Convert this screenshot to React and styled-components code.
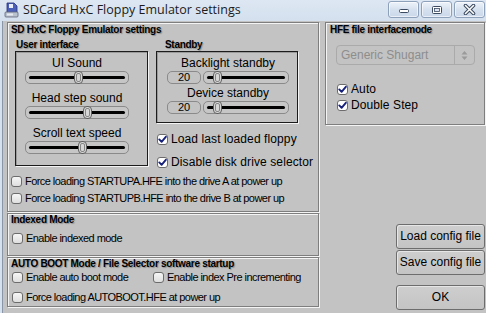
import React from 'react';
import styled, { createGlobalStyle } from 'styled-components';

const Global = createGlobalStyle`
  html, body { margin: 0; padding: 0; background: #c3c3c3; }
  body { font-family: "Liberation Sans", Arial, sans-serif; }
  * { box-sizing: border-box; }
`;

const GRAY = '#c3c3c3';

const Window = styled.div`
  width: 486px;
  height: 313px;
  overflow: hidden;
  display: flex;
  flex-direction: column;
  background: #d5e1ef;
`;

const TitleBar = styled.div`
  height: 21px;
  flex: none;
  display: flex;
  align-items: flex-start;
  padding-left: 4px;
  background: linear-gradient(#dde7f3, #d4e0ee);
`;

const TitleIcon = styled.svg`
  margin-top: 2px;
  flex: none;
`;

const TitleText = styled.span`
  font-family: "Open Sans", "Noto Sans", sans-serif;
  font-size: 12.5px;
  line-height: 20px;
  color: #1b1b1b;
  margin-left: 3px;
  white-space: nowrap;
`;

const Controls = styled.div`
  margin-left: auto;
  margin-right: 1px;
  margin-top: 1px;
  display: flex;
  gap: 2px;
`;

const CtrlButton = styled.div`
  width: 31px;
  height: 17px;
  border: 1px solid #8ea1bb;
  border-radius: 3px;
  background: linear-gradient(#eef3fa, #d6e1ef 50%, #cbd8ea);
  box-shadow: inset 0 0 0 1px rgba(255,255,255,0.6);
  display: flex;
  align-items: center;
  justify-content: center;
`;

const Client = styled.div`
  flex: 1;
  display: flex;
  gap: 6px;
  background: ${GRAY};
  margin-left: 2px;
  border-left: 1px solid #8a96a6;
  padding: 1px 0 0 4px;
`;

const LeftCol = styled.div`
  width: 312px;
  flex: none;
  display: flex;
  flex-direction: column;
  gap: 1px;
`;

const RightCol = styled.div`
  width: 160px;
  flex: none;
  display: flex;
  flex-direction: column;
`;

const Group = styled.div`
  height: ${p => p.$h}px;
  flex: none;
  border: 1px solid #7e7e7e;
  box-shadow: inset 1px 1px 0 #f4f4f4, 1px 1px 0 #f4f4f4;
  padding: ${p => p.$pad || '1px 0 0 3px'};
  display: flex;
  flex-direction: column;
`;

const GroupTitle = styled.div`
  font: bold 10px/${p => p.$lh || 12}px "Liberation Sans", Arial, sans-serif;
  letter-spacing: -0.3px;
  color: #000;
  text-shadow: 1px 1px 1px rgba(0,0,0,0.28);
  white-space: nowrap;
  margin-bottom: ${p => p.$mb || 0}px;
`;

const SubRow = styled.div`
  display: flex;
  gap: 8px;
  margin-top: 3px;
  margin-left: 4px;
`;

const SubCol = styled.div`
  display: flex;
  flex-direction: column;
  width: ${p => p.$w}px;
`;

const SubTitle = styled(GroupTitle)`
  margin-left: ${p => p.$ml}px;
`;

const InsetBox = styled.div`
  width: ${p => p.$w}px;
  height: ${p => p.$h}px;
  border: 1px solid #1c1c1c;
  box-shadow: 1px 1px 0 #f4f4f4, inset 1px 1px 0 #9a9a9a;
  padding: ${p => p.$pad};
  display: flex;
  flex-direction: column;
  gap: ${p => p.$gap}px;
`;

const SliderBlock = styled.div`
  display: flex;
  flex-direction: column;
  width: ${p => p.$w}px;
`;

const SliderLabel = styled.div`
  font-size: 12px;
  line-height: 14px;
  text-align: center;
  color: #000;
  margin-bottom: 1px;
  white-space: nowrap;
`;

const ControlRow = styled.div`
  display: flex;
  gap: 2px;
`;

const Track = styled.div`
  position: relative;
  width: ${p => p.$w}px;
  height: 13px;
  border: 1px solid #8a8a8a;
  border-radius: 5px;
  background: #c6c6c6;
`;

const Bar = styled.div`
  position: absolute;
  left: 3px;
  right: 3px;
  top: 4px;
  height: 3px;
  border-radius: 2px;
  background: #000;
`;

const Thumb = styled.div`
  position: absolute;
  top: -1px;
  width: 9px;
  height: 13px;
  margin-left: -4px;
  border: 1px solid #5e5e5e;
  border-radius: 4px;
  background: #d6d6d6;
  display: flex;
  align-items: center;
  justify-content: center;
  &::after {
    content: '';
    width: 3px;
    height: 7px;
    border: 1px solid #858585;
    border-radius: 2px;
  }
`;

const NumBox = styled.div`
  width: 34px;
  height: 13px;
  border: 1px solid #8a8a8a;
  border-radius: 5px;
  font-size: 11px;
  line-height: 11px;
  text-align: center;
  color: #000;
`;

const CheckRow = styled.label`
  display: flex;
  align-items: center;
  gap: 3px;
  height: 16px;
  width: ${p => (p.$w ? `${p.$w}px` : 'auto')};
  flex: none;
  margin: ${p => p.$m || '0'};
  font-size: ${p => p.$fs || 11}px;
  letter-spacing: ${p => (p.$fs === 12 ? '0.1px' : '-0.55px')};
  color: #000;
  white-space: nowrap;
`;

const Box = styled.span`
  width: 11px;
  height: 11px;
  flex: none;
  border: 1px solid #6c6c6c;
  border-radius: 3px;
  background: ${p => (p.$on ? '#ffffff' : 'linear-gradient(#f6f6f6, #dedede)')};
  display: flex;
  align-items: center;
  justify-content: center;
`;

const FlexRow = styled.div`
  display: flex;
  align-items: center;
  margin: ${p => p.$m || '0'};
`;

const Select = styled.div`
  width: 139px;
  height: 20px;
  margin: 9px 0 0 6px;
  border: 1px solid #aaaaaa;
  border-radius: 4px;
  display: flex;
  align-items: center;
  font-size: 12px;
  color: #8d8d8d;
`;

const SelectText = styled.span`
  flex: 1;
  padding-left: 4px;
`;

const SelectArrow = styled.span`
  width: 20px;
  height: 100%;
  border-left: 1px solid #aaaaaa;
  display: flex;
  align-items: center;
  justify-content: center;
`;

const Button = styled.div`
  width: 89px;
  height: 25px;
  align-self: flex-end;
  margin-top: ${p => p.$mt}px;
  border: 1px solid #6d6d6d;
  border-radius: 3px;
  background: linear-gradient(#cecece, #c4c4c4);
  box-shadow: inset 1px 1px 0 #e6e6e6;
  font-size: 12px;
  line-height: 23px;
  text-align: center;
  color: #000;
  white-space: nowrap;
`;

const CheckMark = () => (
  <svg width="9" height="9" viewBox="0 0 9 9">
    <path d="M1.3 4.4 L3.6 6.8 L7.8 1.8" fill="none" stroke="#16207a" strokeWidth="1.9" strokeLinecap="round" strokeLinejoin="round" />
  </svg>
);

const Check = ({ on, children, ...rest }) => (
  <CheckRow {...rest}>
    <Box $on={on}>{on && <CheckMark />}</Box>
    <span>{children}</span>
  </CheckRow>
);

const Slider = ({ w, pct }) => (
  <Track $w={w}>
    <Bar />
    <Thumb style={{ left: `${pct}%` }} />
  </Track>
);

const uiSliders = [
  { label: 'UI Sound', pct: 51 },
  { label: 'Head step sound', pct: 60 },
  { label: 'Scroll text speed', pct: 55 },
];

const standby = [
  { label: 'Backlight standby', value: 20, pct: 16 },
  { label: 'Device standby', value: 20, pct: 16 },
];

export default function App() {
  return (
    <>
      <Global />
      <Window>
        <TitleBar>
          <TitleIcon width="16" height="16" viewBox="0 0 16 16">
            <path d="M3 1 h7 l3 3 v10 h-10 z" fill="#4b5fb8" stroke="#27307a" strokeWidth="0.8" />
            <rect x="5" y="2" width="4" height="4" fill="#e8ecf6" />
            <rect x="1" y="10" width="13" height="5" rx="1" fill="#b9c2cf" stroke="#5d6678" strokeWidth="0.8" />
            <rect x="3" y="11.5" width="6" height="2" fill="#e6eaf0" />
          </TitleIcon>
          <TitleText>SDCard HxC Floppy Emulator settings</TitleText>
          <Controls>
            <CtrlButton>
              <svg width="12" height="8" viewBox="0 0 12 8">
                <rect x="1.5" y="3.5" width="9" height="3" rx="1" fill="#fff" stroke="#3b4a60" />
              </svg>
            </CtrlButton>
            <CtrlButton>
              <svg width="12" height="10" viewBox="0 0 12 10">
                <rect x="1.5" y="1.5" width="9" height="7" rx="1" fill="#fff" stroke="#3b4a60" />
                <rect x="3.5" y="3.5" width="5" height="3" fill="#dbe4f0" stroke="#3b4a60" strokeWidth="0.8" />
              </svg>
            </CtrlButton>
            <CtrlButton>
              <svg width="13" height="11" viewBox="0 0 13 11">
                <path d="M2.5 1.5 L10.5 9.5 M10.5 1.5 L2.5 9.5" stroke="#3b4a60" strokeWidth="3.6" strokeLinecap="round" />
                <path d="M2.5 1.5 L10.5 9.5 M10.5 1.5 L2.5 9.5" stroke="#fff" strokeWidth="1.6" strokeLinecap="round" />
              </svg>
            </CtrlButton>
          </Controls>
        </TitleBar>
        <Client>
          <LeftCol>
            <Group $h={190}>
              <GroupTitle>SD HxC Floppy Emulator settings</GroupTitle>
              <SubRow>
                <SubCol $w={133}>
                  <SubTitle $ml={1}>User interface</SubTitle>
                  <InsetBox $w={133} $h={115} $pad="4px 0 0 9px" $gap={7}>
                    {uiSliders.map(s => (
                      <SliderBlock key={s.label} $w={104}>
                        <SliderLabel>{s.label}</SliderLabel>
                        <Slider w={104} pct={s.pct} />
                      </SliderBlock>
                    ))}
                  </InsetBox>
                </SubCol>
                <SubCol $w={165}>
                  <SubTitle $ml={9}>Standby</SubTitle>
                  <InsetBox $w={142} $h={72} $pad="4px 0 0 10px" $gap={2}>
                    {standby.map(s => (
                      <SliderBlock key={s.label} $w={122}>
                        <SliderLabel>{s.label}</SliderLabel>
                        <ControlRow>
                          <NumBox>{s.value}</NumBox>
                          <Slider w={86} pct={s.pct} />
                        </ControlRow>
                      </SliderBlock>
                    ))}
                  </InsetBox>
                  <Check on $fs={12} $m="8px 0 0 1px">Load last loaded floppy</Check>
                  <Check on $fs={12} $m="7px 0 0 1px">Disable disk drive selector</Check>
                </SubCol>
              </SubRow>
              <Check $m="3px 0 0 0">Force loading STARTUPA.HFE into the drive A at power up</Check>
              <Check $m="1px 0 0 0">Force loading STARTUPB.HFE into the drive B at power up</Check>
            </Group>
            <Group $h={43} $pad="0 0 0 3px">
              <GroupTitle $mb={4}>Indexed Mode</GroupTitle>
              <Check $m="0 0 0 1px">Enable indexed mode</Check>
            </Group>
            <Group $h={50} $pad="0 0 0 3px">
              <GroupTitle $lh={11}>AUTO BOOT Mode / File Selector software startup</GroupTitle>
              <FlexRow>
                <Check $w={141} $m="0 0 0 1px">Enable auto boot mode</Check>
                <Check>Enable index Pre incrementing</Check>
              </FlexRow>
              <Check $m="4px 0 0 1px">Force loading AUTOBOOT.HFE at power up</Check>
            </Group>
          </LeftCol>
          <RightCol>
            <Group $h={103} $pad="1px 0 0 4px">
              <GroupTitle>HFE file interfacemode</GroupTitle>
              <Select>
                <SelectText>Generic Shugart</SelectText>
                <SelectArrow>
                  <svg width="7" height="11" viewBox="0 0 7 11">
                    <path d="M0.5 4.5 L3.5 1 L6.5 4.5 Z M0.5 6.5 L3.5 10 L6.5 6.5 Z" fill="#9a9a9a" />
                  </svg>
                </SelectArrow>
              </Select>
              <Check on $fs={12} $m="16px 0 0 7px">Auto</Check>
              <Check on $fs={12} $m="0 0 0 7px">Double Step</Check>
            </Group>
            <Button $mt={99}>Load config file</Button>
            <Button $mt={1}>Save config file</Button>
            <Button $mt={10}>OK</Button>
          </RightCol>
        </Client>
      </Window>
    </>
  );
}
